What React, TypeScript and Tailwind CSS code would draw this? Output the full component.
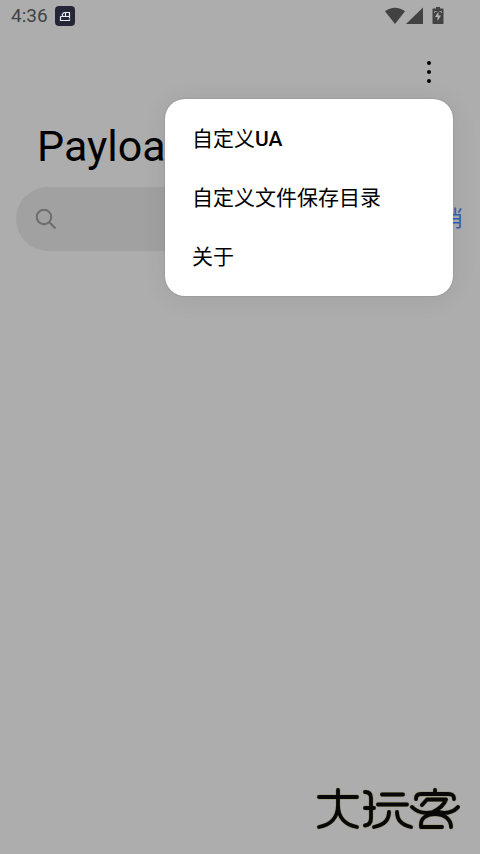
const menuItems = [
  { id: "ua", text: "自定义", latin: "UA" },
  { id: "dir", text: "自定义文件保存目录", latin: "" },
  { id: "about", text: "关于", latin: "" },
];

function StatusBar() {
  return (
    <header className="flex h-8 items-center justify-between pr-9 pl-[11px] text-[#424242]">
      <div className="flex items-center gap-[7px]">
        <span className="text-[19px] leading-6">4:36</span>
        <svg className="size-5" viewBox="0 0 20 20" fill="none" aria-hidden="true">
          <rect width="20" height="20" rx="4" fill="#252635" />
          <path d="M5.500 10.500H14.500V6.500H9L7.500 8V10.500M5.500 10.500V14.500h9V10.500M10.500 7v3.500" stroke="#e9eaf4" strokeWidth="1.200" />
          <path d="M8 6.500L6.500 9M14.500 12v2" stroke="#6d8ed0" strokeWidth="1" />
        </svg>
      </div>
      <div className="flex items-center">
        <svg className="h-[18px] w-5" viewBox="0 0 20 18" fill="currentColor" aria-hidden="true">
          <path d="M0 4.300C6-.600 14-.600 20 4.300L10 17z" />
        </svg>
        <svg className="h-[18px] w-[18px]" viewBox="0 0 18 18" fill="currentColor" aria-hidden="true">
          <path d="M18 0.500V17H1z" />
        </svg>
        <svg className="ml-[9px] h-[18px] w-3" viewBox="0 0 12 18" aria-hidden="true">
          <path d="M4 0h4v1.500h3L11.500 2V16.500l-.5.500H1L.5 16.500V2L1 1.500h3z" fill="currentColor" />
          <path d="M6.500 4.500L3 10h2.500V14L9 8.500H6.500z" fill="#b0b0b0" />
          <path d="M2.500 6V4.500h2M9.500 6V4.500h-2" stroke="#999" fill="none" />
        </svg>
      </div>
    </header>
  );
}

function Watermark() {
  return (
    <svg
      className="h-11 w-36"
      viewBox="0 0 144 44"
      fill="none"
      strokeLinecap="round"
      strokeLinejoin="round"
      role="img"
      aria-label="大玩客"
    >
      {[
        { color: "#96926f", width: 4.8 },
        { color: "#080808", width: 3.8 },
      ].map((s) => (
        <g key={s.color} stroke={s.color} strokeWidth={s.width}>
          <path d="M3 10H41M22 3V18C22 31 14 38 3 40M22 18C22 31 30 38 41 40" />
          <path d="M49 5C53 5 55 7 55 11V31C55 36 53 38 49 38.500M49 21H58" />
          <path d="M66 7.500H87M62 17.500H91M73 25C73 33 68 38 58 40M81 25C81 33 86 38 95 40" />
          <path d="M119 3V7M100 12C100 8 102 7 105 7H132C136 7 138 8 138 12" />
          <path d="M106 18L111 12.500H130C128 18 123 22 117 25C109 27 101 25 96 20M120 24C129 28 138 25 142 20" />
          <path d="M105 40V37C105 31 111 27 119 27C128 27 135 32 135 40M105 40H126" />
        </g>
      ))}
    </svg>
  );
}

export default function App() {
  return (
    <div className="relative flex min-h-screen flex-col overflow-hidden bg-[#adadad] font-[Roboto,'Noto_Sans_CJK_SC',sans-serif] text-black">
      <StatusBar />
      <div className="flex h-20 items-center justify-end pr-[39px]">
        <button type="button" aria-label="更多" className="flex h-10 w-6 items-center justify-center">
          <svg className="h-6 w-1" viewBox="0 0 4 24" aria-hidden="true">
            <circle cx="2" cy="3" r="2" />
            <circle cx="2" cy="12" r="2" />
            <circle cx="2" cy="21" r="2" />
          </svg>
        </button>
      </div>
      <h1 className="pl-[37px] text-[43px] leading-[68px] font-normal">Payload</h1>
      <div className="mt-[7px] flex items-center gap-4 pr-[17px] pl-4">
        <label className="flex h-16 min-w-0 flex-1 items-center gap-3 rounded-full bg-[#a1a1a1] px-5">
          <svg className="size-5 shrink-0 text-[#6c6c6c]" viewBox="0 0 20 20" fill="none" stroke="currentColor" strokeWidth="2" aria-hidden="true">
            <circle cx="8" cy="8" r="7.200" />
            <path d="M13 13L19.500 19.500" />
          </svg>
          <input type="search" aria-label="搜索" className="min-w-0 flex-1 bg-transparent text-[21px] outline-none" />
        </label>
        <button type="button" className="text-[22px] leading-8 text-[#315fb5]">取消</button>
      </div>
      <div
        role="menu"
        className="absolute top-[99px] right-[27px] w-72 rounded-[20px] bg-white py-[10px] shadow-[0_2px_28px_rgba(0,0,0,0.07),0_0_2px_rgba(0,0,0,0.2)]"
      >
        {menuItems.map((item) => (
          <button
            key={item.id}
            type="button"
            role="menuitem"
            className="flex h-[59px] w-full items-center pl-[27px] text-left text-[21px] leading-8"
          >
            {item.text}
            {item.latin && <span className="font-medium">{item.latin}</span>}
          </button>
        ))}
      </div>
      <footer className="mt-auto flex justify-end pr-5 pb-[23px]">
        <Watermark />
      </footer>
    </div>
  );
}
